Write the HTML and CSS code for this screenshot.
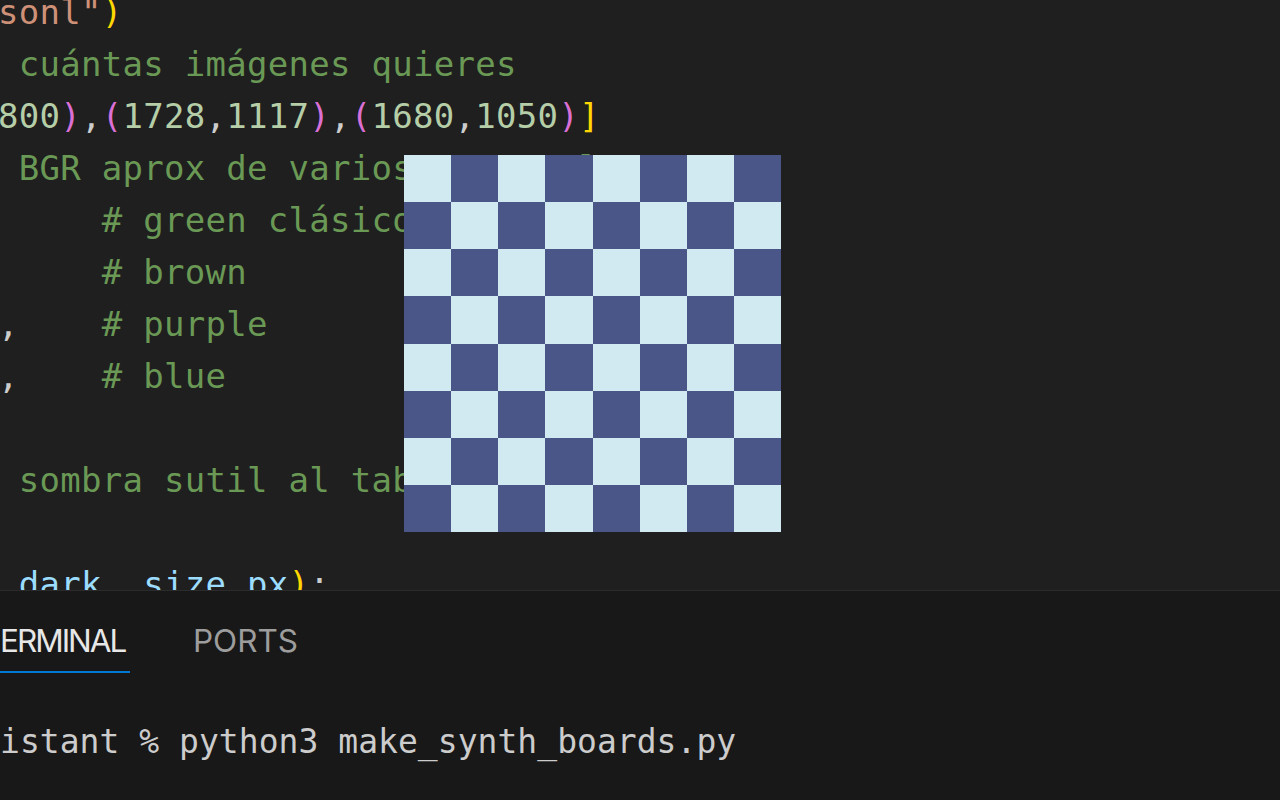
FILE: index.html
```html
<!DOCTYPE html>
<html lang="es">
<head>
<meta charset="utf-8">
<title>make_synth_boards.py</title>
<link rel="stylesheet" href="styles.css">
</head>
<body>
<div class="editor">
  <div class="code">
    <div class="line"><span class="str">sonl"</span><span class="b1">)</span></div>
    <div class="line"><span class="cm"> cuántas imágenes quieres</span></div>
    <div class="line"><span class="num">800</span><span class="b2">)</span><span class="pn">,</span><span class="b2">(</span><span class="num">1728</span><span class="pn">,</span><span class="num">1117</span><span class="b2">)</span><span class="pn">,</span><span class="b2">(</span><span class="num">1680</span><span class="pn">,</span><span class="num">1050</span><span class="b2">)</span><span class="b1">]</span></div>
    <div class="line"><span class="cm"> BGR aprox de varios en canal</span></div>
    <div class="line"><span class="cm">     # green clásico</span></div>
    <div class="line"><span class="cm">     # brown</span></div>
    <div class="line"><span class="pn">,</span><span class="cm">    # purple</span></div>
    <div class="line"><span class="pn">,</span><span class="cm">    # blue</span></div>
    <div class="line"> </div>
    <div class="line"><span class="cm"> sombra sutil al tablero</span></div>
    <div class="line"> </div>
    <div class="line"> <span class="var">dark</span><span class="pn">, </span><span class="var">size_px</span><span class="b1">)</span><span class="pn">:</span></div>
  </div>
  <div class="preview">
    <div class="c"></div><div class="c d"></div><div class="c"></div><div class="c d"></div><div class="c"></div><div class="c d"></div><div class="c"></div><div class="c d"></div>
    <div class="c d"></div><div class="c"></div><div class="c d"></div><div class="c"></div><div class="c d"></div><div class="c"></div><div class="c d"></div><div class="c"></div>
    <div class="c"></div><div class="c d"></div><div class="c"></div><div class="c d"></div><div class="c"></div><div class="c d"></div><div class="c"></div><div class="c d"></div>
    <div class="c d"></div><div class="c"></div><div class="c d"></div><div class="c"></div><div class="c d"></div><div class="c"></div><div class="c d"></div><div class="c"></div>
    <div class="c"></div><div class="c d"></div><div class="c"></div><div class="c d"></div><div class="c"></div><div class="c d"></div><div class="c"></div><div class="c d"></div>
    <div class="c d"></div><div class="c"></div><div class="c d"></div><div class="c"></div><div class="c d"></div><div class="c"></div><div class="c d"></div><div class="c"></div>
    <div class="c"></div><div class="c d"></div><div class="c"></div><div class="c d"></div><div class="c"></div><div class="c d"></div><div class="c"></div><div class="c d"></div>
    <div class="c d"></div><div class="c"></div><div class="c d"></div><div class="c"></div><div class="c d"></div><div class="c"></div><div class="c d"></div><div class="c"></div>
  </div>
</div>
<div class="panel">
  <div class="tabs">
    <div class="tab active">ERMINAL</div>
    <div class="tab">PORTS</div>
  </div>
  <div class="term">istant % python3 make_synth_boards.py</div>
</div>
</body>
</html>
```
FILE: styles.css
```css
html, body {
  margin: 0;
  padding: 0;
  background: #1f1f1f;
}

body {
  width: 1280px;
  height: 800px;
  overflow: hidden;
  display: flex;
  flex-direction: column;
}

.editor {
  position: relative;
  height: 590px;
  flex: none;
  overflow: hidden;
  background: #1f1f1f;
}

.code {
  margin: -14px 0 0 -2px;
  font-family: "DejaVu Sans Mono", monospace;
  font-size: 34px;
  line-height: 52px;
  letter-spacing: 0.28px;
  color: #cccccc;
}

.line {
  height: 52px;
  white-space: pre;
}

.str { color: #ce9178; }
.cm { color: #6a9955; }
.num { color: #b5cea8; }
.pn { color: #cccccc; }
.var { color: #9cdcfe; }
.b1 { color: #ffd700; }
.b2 { color: #da70d6; }

.preview {
  position: absolute;
  left: 404px;
  top: 155px;
  width: 377px;
  height: 377px;
  display: grid;
  grid-template-columns: repeat(8, 1fr);
  grid-template-rows: repeat(8, 1fr);
}

.c {
  background: #d1e9f0;
}

.c.d {
  background: #4a5688;
}

.panel {
  flex: 1;
  background: #181818;
  border-top: 1px solid #2b2b2b;
  display: flex;
  flex-direction: column;
}

.tabs {
  height: 82px;
  display: flex;
  align-items: flex-end;
  gap: 63px;
}

.tab {
  font-family: Inter, "Noto Sans", sans-serif;
  font-size: 31.5px;
  line-height: 40px;
  color: #9d9d9d;
  padding-bottom: 12.5px;
}

.tab.active {
  width: 124px;
  color: #e7e7e7;
  letter-spacing: -2px;
  padding: 0 6px 10.5px 0;
  border-bottom: 2px solid #0078d4;
}

.term {
  margin-top: 48.5px;
  font-family: "DejaVu Sans Mono", monospace;
  font-size: 33px;
  line-height: 40px;
  letter-spacing: 0.03px;
  color: #cccccc;
  white-space: pre;
}
```
